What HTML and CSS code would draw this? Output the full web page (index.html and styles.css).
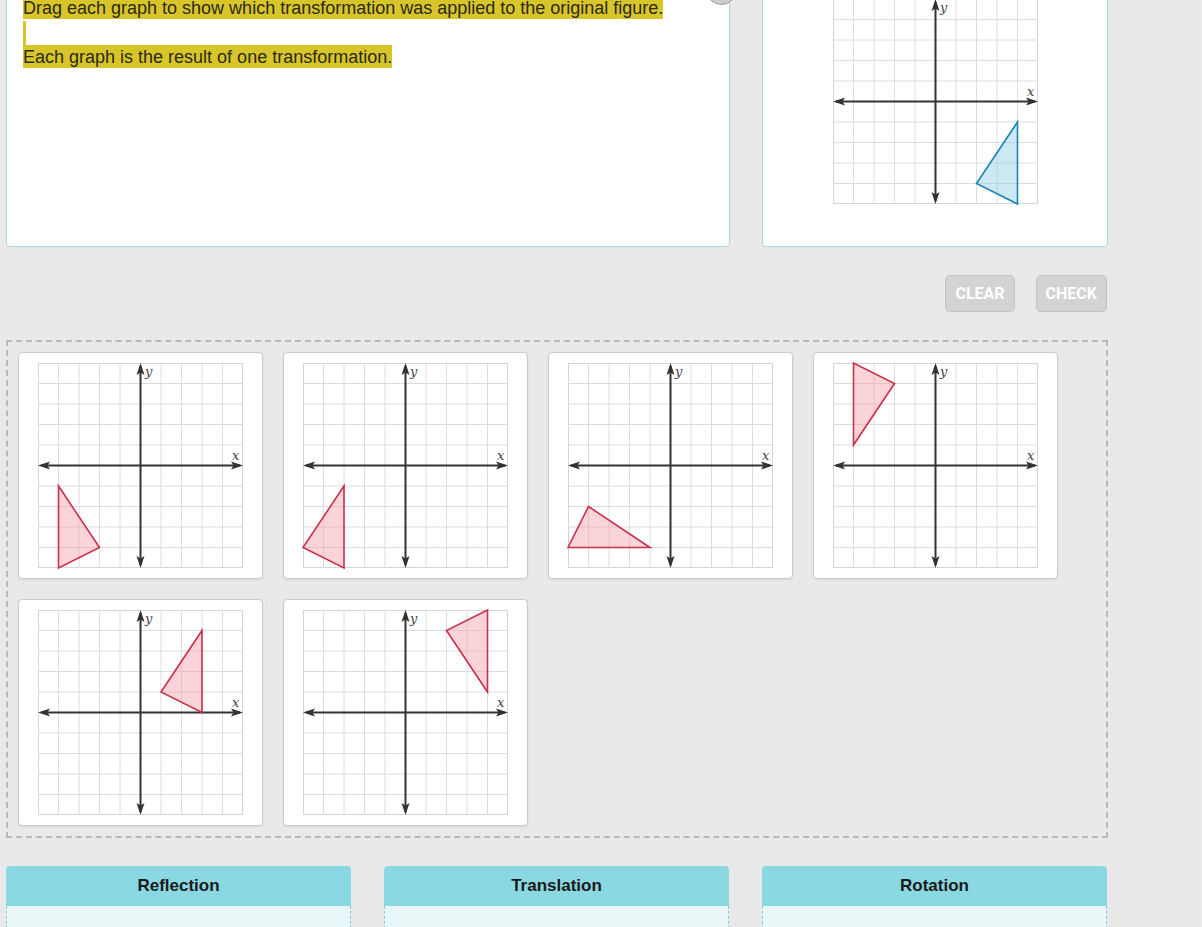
FILE: index.html
```html
<!DOCTYPE html>
<html>
<head>
<meta charset="utf-8">
<title>Transformations</title>
<link rel="stylesheet" href="styles.css">
</head>
<body>
<svg class="defs" aria-hidden="true">
  <defs>
    <symbol id="grid" viewBox="0 0 205 205" overflow="visible">
      <rect x="0.5" y="0.5" width="204" height="204" fill="#ffffff" stroke="#d4d4d4"/>
      <path d="M20.5 0V205M41 0V205M61.5 0V205M82 0V205M123 0V205M143.5 0V205M164 0V205M184.5 0V205M0 20.5H205M0 41H205M0 61.5H205M0 82H205M0 123H205M0 143.5H205M0 164H205M0 184.5H205" stroke="#dcdcdc" stroke-width="1" fill="none"/>
      <path d="M3 102.5H202M102.5 3V202" stroke="#333333" stroke-width="2" fill="none"/>
      <polygon points="0,102.5 12,98.5 9.5,102.5 12,106.5" fill="#333333"/>
      <polygon points="205,102.5 193,98.5 195.5,102.5 193,106.5" fill="#333333"/>
      <polygon points="102.5,0 98.5,12 102.5,9.5 106.5,12" fill="#333333"/>
      <polygon points="102.5,205 98.5,193 102.5,195.5 106.5,193" fill="#333333"/>
      <text x="107" y="13" font-family="DejaVu Serif, serif" font-style="italic" font-size="13" fill="#444444">y</text>
      <text x="194" y="97" font-family="DejaVu Serif, serif" font-style="italic" font-size="13" fill="#444444">x</text>
    </symbol>
  </defs>
</svg>

<main class="page">
  <section class="top-row">
    <div class="panel prompt">
      <p class="line"><span class="hl">Drag each graph to show which transformation was applied to the original figure.</span></p>
      <p class="line"><span class="hl empty"></span></p>
      <p class="line"><span class="hl">Each graph is the result of one transformation.</span></p>
      <span class="audio-btn"></span>
    </div>
    <div class="panel figure">
      <svg class="graph" viewBox="0 0 205 205">
        <use href="#grid"/>
        <polygon class="tri blue" points="143.5,184.5 184.5,123 184.5,205"/>
      </svg>
    </div>
  </section>

  <div class="actions">
    <button class="btn">CLEAR</button>
    <button class="btn">CHECK</button>
  </div>

  <section class="bank">
    <div class="card">
      <svg class="graph" viewBox="0 0 205 205"><use href="#grid"/><polygon class="tri red" points="20.5,123 20.5,205 61.5,184.5"/></svg>
    </div>
    <div class="card">
      <svg class="graph" viewBox="0 0 205 205"><use href="#grid"/><polygon class="tri red" points="0,184.5 41,123 41,205"/></svg>
    </div>
    <div class="card">
      <svg class="graph" viewBox="0 0 205 205"><use href="#grid"/><polygon class="tri red" points="0,184.5 20.5,143.5 82,184.5"/></svg>
    </div>
    <div class="card">
      <svg class="graph" viewBox="0 0 205 205"><use href="#grid"/><polygon class="tri red" points="20.5,0 20.5,82 61.5,20.5"/></svg>
    </div>
    <div class="card">
      <svg class="graph" viewBox="0 0 205 205"><use href="#grid"/><polygon class="tri red" points="164,20.5 164,102.5 123,82"/></svg>
    </div>
    <div class="card">
      <svg class="graph" viewBox="0 0 205 205"><use href="#grid"/><polygon class="tri red" points="184.5,0 184.5,82 143.5,20.5"/></svg>
    </div>
  </section>

  <section class="categories">
    <div class="category">
      <div class="cat-head">Reflection</div>
      <div class="cat-body"></div>
    </div>
    <div class="category">
      <div class="cat-head">Translation</div>
      <div class="cat-body"></div>
    </div>
    <div class="category">
      <div class="cat-head">Rotation</div>
      <div class="cat-body"></div>
    </div>
  </section>
</main>
</body>
</html>
```

FILE: styles.css
```css
html, body {
  margin: 0;
  padding: 0;
}

body {
  background-color: #e8e8e8;
  background-image: repeating-linear-gradient(90deg, rgba(255,255,255,0.14) 0 1px, rgba(0,0,0,0) 1px 4px);
  font-family: "Liberation Sans", Arial, sans-serif;
  color: #222;
  overflow: hidden;
}

.defs {
  position: absolute;
  width: 0;
  height: 0;
  overflow: hidden;
}

.page {
  width: 1102px;
  padding-left: 6px;
  margin-top: -60px;
}

.top-row {
  display: grid;
  grid-template-columns: 724px 346px;
  column-gap: 32px;
}

.panel {
  background: #ffffff;
  border: 1px solid #a9d7de;
  border-radius: 4px;
  height: 307px;
  box-sizing: border-box;
}

.prompt {
  position: relative;
  padding: 55px 16px 0 16px;
}

.line {
  margin: 0;
  font-size: 18px;
  line-height: 24.5px;
  height: 24.5px;
}

.hl {
  background: #d8c52a;
  color: #2a2a1a;
  padding: 2px 0 1px 0;
}

.hl.empty {
  display: inline-block;
  width: 3px;
  height: 24px;
  padding: 0;
  vertical-align: top;
}

.audio-btn {
  position: absolute;
  right: -8px;
  top: 33px;
  width: 31px;
  height: 31px;
  border-radius: 50%;
  background: #cdcdcd;
  border: 1px solid #9a9a9a;
  box-sizing: border-box;
}

.figure {
  display: flex;
  justify-content: center;
  padding-top: 58px;
}

.graph {
  display: block;
  width: 205px;
  height: 205px;
  overflow: visible;
}

.tri {
  stroke-width: 1.6;
  stroke-linejoin: miter;
}

.tri.red {
  fill: rgba(245, 160, 168, 0.45);
  stroke: #c9304c;
}

.tri.blue {
  fill: rgba(140, 205, 228, 0.45);
  stroke: #1b84b3;
}

.actions {
  display: flex;
  justify-content: flex-end;
  gap: 21px;
  margin-top: 28px;
  margin-right: 1px;
  height: 37px;
}

.btn {
  font-family: Roboto, "Liberation Sans", sans-serif;
  font-weight: 700;
  font-size: 16px;
  color: #ffffff;
  background: #d3d3d3;
  border: 1px solid #c2c2c2;
  border-radius: 5px;
  padding: 0 9px;
  height: 37px;
  letter-spacing: 0;
}

.bank {
  margin-top: 28px;
  border: 2px dashed #b8b8b8;
  padding: 10px;
  display: flex;
  flex-wrap: wrap;
  gap: 20px;
  height: 498px;
  box-sizing: border-box;
  align-content: flex-start;
}

.card {
  width: 245px;
  height: 227px;
  box-sizing: border-box;
  background: #ffffff;
  border: 1px solid #cbcbcb;
  border-radius: 4px;
  padding: 10px 19px;
  box-shadow: 0 1px 2px rgba(0,0,0,0.08);
}

.categories {
  margin-top: 28px;
  display: grid;
  grid-template-columns: 345px 345px 345px;
  column-gap: 33px;
}

.category {
  display: flex;
  flex-direction: column;
}

.cat-head {
  background: #8ad8e2;
  border-radius: 4px 4px 0 0;
  height: 40px;
  display: flex;
  align-items: center;
  justify-content: center;
  font-weight: 700;
  font-size: 17px;
  color: #1a1a1a;
}

.cat-body {
  background: #eaf7f9;
  border: 1px dashed #86cdd8;
  border-top: none;
  height: 120px;
}
```
